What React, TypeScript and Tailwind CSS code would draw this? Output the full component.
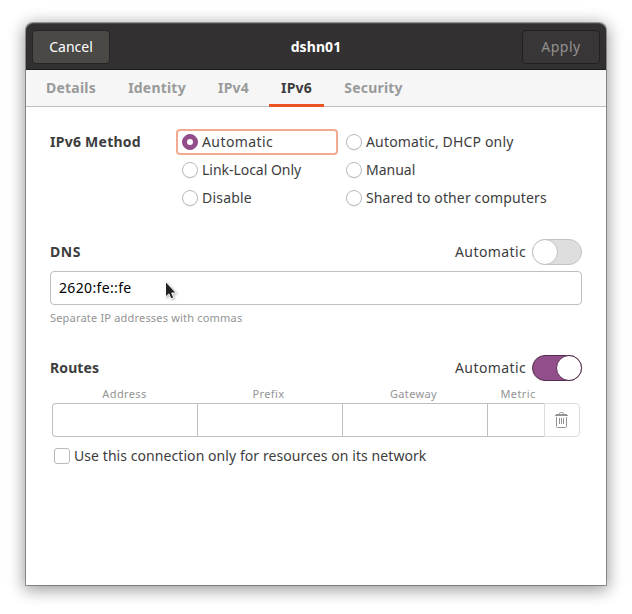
import type { ReactNode } from "react";

function Radio({ label, checked, track = "" }: { label: string; checked?: boolean; track?: string }) {
  return (
    <label
      className={
        "flex h-[26px] items-center rounded-[4px] border-2 pl-1 " +
        (checked ? "border-[#f4aa90]" : "border-transparent")
      }
    >
      {checked ? (
        <span className="flex size-4 items-center justify-center rounded-full border border-[#8a4984] bg-[#924d8b]">
          <span className="size-[6px] rounded-full bg-white" />
        </span>
      ) : (
        <span className="size-4 rounded-full border border-[#b9b9b9] bg-white shadow-[0_1px_1px_rgba(0,0,0,0.06)]" />
      )}
      <span className={"ml-1 " + track}>{label}</span>
    </label>
  );
}

function Switch({ on }: { on?: boolean }) {
  return (
    <span
      className={
        "flex h-[26px] w-[50px] rounded-full border " +
        (on ? "justify-end border-[#532c4f] bg-[#924d8b]" : "justify-start border-[#c2c2c2] bg-[#dedede]")
      }
    >
      <span
        className={
          "-m-px size-[26px] rounded-full border bg-white " + (on ? "border-[#532c4f]" : "border-[#c2c2c2]")
        }
      />
    </span>
  );
}

function SectionHead({ title, track, on }: { title: string; track: string; on?: boolean }) {
  return (
    <div className="flex h-[26px] items-center justify-between">
      <span className={"font-bold " + track}>{title}</span>
      <div className="flex items-center">
        <span className="w-[77px] tracking-[0.42px]">Automatic</span>
        <Switch on={on} />
      </div>
    </div>
  );
}

function Tab({ children, active, cls }: { children: ReactNode; active?: boolean; cls: string }) {
  return (
    <div
      className={
        "flex h-[37px] items-center justify-center border-b-[3px] pt-[2px] font-bold tracking-[0.2px] " +
        (active ? "border-[#e95420] text-[#3d3d3d] " : "border-transparent text-[#999b9a] ") +
        cls
      }
    >
      {children}
    </div>
  );
}

export default function App() {
  return (
    <div className="h-[614px] w-[632px] overflow-hidden bg-white pt-[23px] pl-[26px] font-['Noto_Sans','Open_Sans',sans-serif] text-[14px] leading-5 whitespace-nowrap text-[#3d3d3d]">
      <div className="relative h-[562px] w-[580px] rounded-t-[7px] bg-white shadow-[0_0_0_1px_rgba(0,0,0,0.32),0_3px_16px_2px_rgba(0,0,0,0.4)]">
        <header className="flex h-[47px] items-center justify-between rounded-t-[7px] border-t border-b border-t-[#4b4a49] border-b-[#1d1c1c] bg-[#323030] px-[6px]">
          <button className="h-[34px] w-[78px] rounded-[4px] border border-[#262525] bg-[#4a4946] text-white">Cancel</button>
          <span className="font-bold tracking-[0.1px] text-white">dshn01</span>
          <button className="h-[34px] w-[78px] rounded-[4px] border border-[#222121] bg-[#383636] tracking-[0.5px] text-[#93918f]">Apply</button>
        </header>

        <nav className="flex h-[37px] bg-[#f6f6f6] pl-2 shadow-[inset_0_-1px_0_#bfbfbf]">
          <Tab cls="w-[74px]">Details</Tab>
          <Tab cls="ml-2 w-[82px]">Identity</Tab>
          <Tab cls="ml-2 w-[55px]">IPv4</Tab>
          <Tab active cls="ml-2 w-[55px]">IPv6</Tab>
          <Tab cls="ml-2 w-[83px]">Security</Tab>
        </nav>

        <main className="px-6 pt-[22px]">
          <div className="flex">
            <span className="w-[126px] pt-[3px] font-bold tracking-[0.26px]">IPv6 Method</span>
            <div className="grid grid-cols-[162px_230px] gap-x-[2px] gap-y-[2px]">
              <Radio label="Automatic" track="tracking-[0.42px]" checked />
              <Radio label="Automatic, DHCP only" track="tracking-[0.16px]" />
              <Radio label="Link-Local Only" track="tracking-[-0.03px]" />
              <Radio label="Manual" />
              <Radio label="Disable" track="tracking-[0.2px]" />
              <Radio label="Shared to other computers" track="tracking-[0.13px]" />
            </div>
          </div>

          <section className="mt-7">
            <SectionHead title="DNS" track="tracking-[0.5px]" />
            <div className="mt-[6px] flex h-[34px] items-center rounded-[4px] border border-[#bfbfbf] pl-2 tracking-[0.35px] text-black">2620:fe::fe</div>
            <p className="mt-[3px] text-[11px] tracking-[0.19px] text-[#929495]">Separate IP addresses with commas</p>
          </section>

          <section className="mt-[27px]">
            <SectionHead title="Routes" track="tracking-[0.1px]" on />
            <div className="grid h-[22px] grid-cols-[145px_145px_145px_61px] items-center pt-[3px] pl-[2px] text-center text-[11px] tracking-[0.38px] text-[#929495]">
              <span>Address</span>
              <span className="-ml-[2px]">Prefix</span>
              <span className="-ml-[2px]">Gateway</span>
              <span className="pl-[1px]">Metric</span>
            </div>
            <div className="ml-[2px] flex h-[34px] w-[528px]">
              <span className="w-[145px] rounded-l-[4px] border border-r-0 border-[#bfbfbf]" />
              <span className="w-[145px] border border-r-0 border-[#bfbfbf]" />
              <span className="w-[145px] border border-r-0 border-[#bfbfbf]" />
              <span className="w-[57px] border border-r-0 border-[#bfbfbf]" />
              <span className="flex w-9 items-center justify-center rounded-r-[4px] border border-[#dcdcdc]">
                <svg width="16" height="16" viewBox="0 0 16 16" fill="none" stroke="#929595">
                  <path d="M5.5 2.5v-1q0-1 1-1h2q1 0 1 1v1M2 2.5h11M1 3.5h13" />
                  <path d="M2.5 5v9.5q0 1 1 1h8q1 0 1-1V5M5.5 6v6M7.5 6v6M9.5 6v6" />
                </svg>
              </span>
            </div>
            <label className="mt-[9px] ml-1 flex h-5 items-center">
              <span className="size-4 rounded-[3px] border border-[#b9b9b9]" />
              <span className="ml-1 tracking-[0.07px]">Use this connection only for resources on its network</span>
            </label>
          </section>
        </main>

        <svg
          className="absolute top-[257px] left-[138px] drop-shadow-[1px_1px_1px_rgba(0,0,0,0.3)]"
          width="14"
          height="22"
          viewBox="0 0 14 22"
        >
          <path d="M1.5 1.5v15.5l3.4-3.1 2 4.9 2.8-1.1-2-4.7h4.5z" fill="#222" stroke="#fff" strokeWidth="1" />
        </svg>
      </div>
    </div>
  );
}
